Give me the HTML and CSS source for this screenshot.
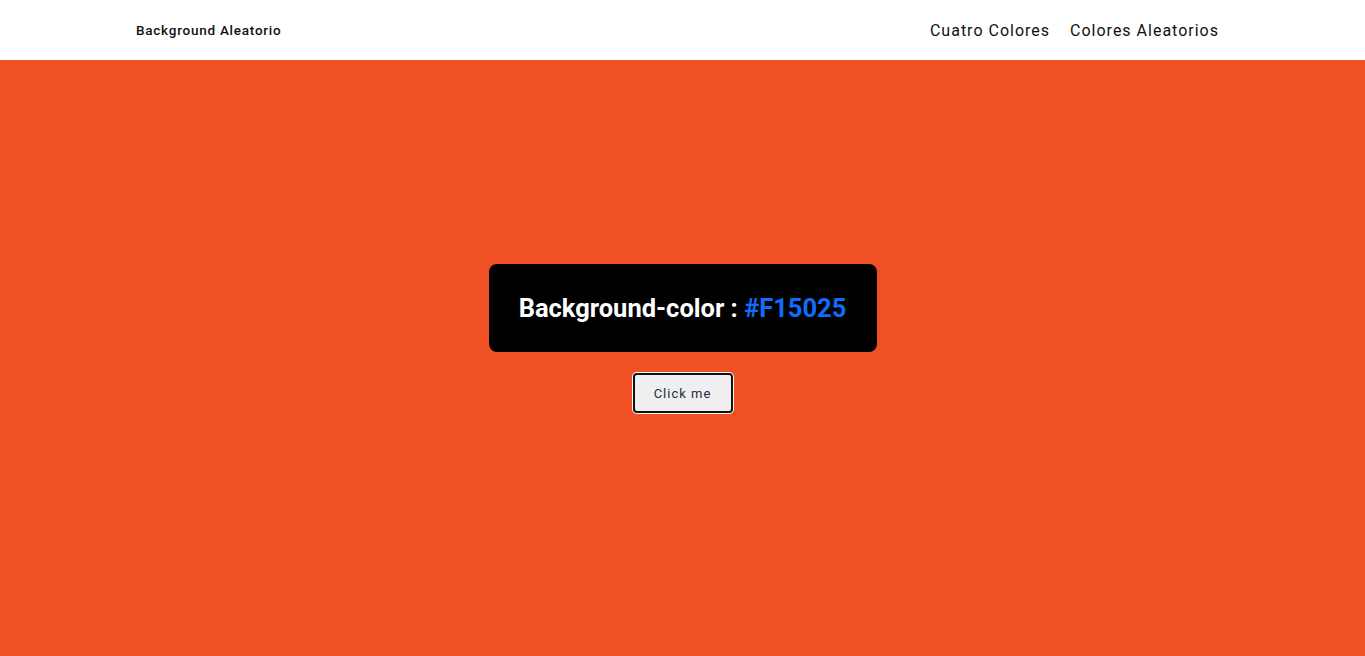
FILE: index.html
```html
<!DOCTYPE html>
<html lang="es">
<head>
<meta charset="utf-8">
<title>Background Aleatorio</title>
<link rel="stylesheet" href="styles.css">
</head>
<body>
<nav class="navbar">
  <div class="nav-inner">
    <a class="brand" href="#">Background Aleatorio</a>
    <ul class="links">
      <li><a href="#">Cuatro Colores</a></li>
      <li><a href="#">Colores Aleatorios</a></li>
    </ul>
  </div>
</nav>
<main class="main">
  <div class="color-box">
    <h2 class="color-title">Background-color : <span class="hex">#F15025</span></h2>
  </div>
  <button class="btn" type="button">Click me</button>
</main>
</body>
</html>
```
FILE: styles.css
```css
* { box-sizing: border-box; }
html, body { margin: 0; padding: 0; height: 100%; }
body {
  font-family: Roboto, "Liberation Sans", sans-serif;
  background: #F15025;
  min-height: 656px;
}
.navbar {
  background: #fff;
  height: 60px;
}
.nav-inner {
  height: 100%;
  padding: 0 146px 0 136px;
  display: flex;
  align-items: center;
  justify-content: space-between;
}
.brand {
  font-size: 13.5px;
  font-weight: 500;
  letter-spacing: 0.75px;
  color: #111;
  text-decoration: none;
}
.links {
  list-style: none;
  margin: 0;
  padding: 0;
  display: flex;
  gap: 20px;
}
.links a {
  font-size: 16px;
  letter-spacing: 1px;
  color: #111;
  text-decoration: none;
}
.main {
  display: flex;
  flex-direction: column;
  align-items: center;
  padding-top: 204px;
  gap: 21px;
}
.color-box {
  background: #000;
  border-radius: 8px;
  width: 388px;
  height: 88px;
  display: flex;
  align-items: center;
  justify-content: center;
}
.color-title {
  margin: 0;
  color: #fff;
  font-size: 25.5px;
  font-weight: 700;
  letter-spacing: 0;
}
.hex { color: #0d6efd; }
.btn {
  width: 100px;
  height: 40px;
  background: #efefef;
  border: 2px solid #111;
  border-radius: 4px;
  box-shadow: 0 0 0 1px #fff;
  font-family: Roboto, "Liberation Sans", sans-serif;
  font-size: 13px;
  letter-spacing: 1px;
  color: #1c2a44;
  cursor: pointer;
}
```
